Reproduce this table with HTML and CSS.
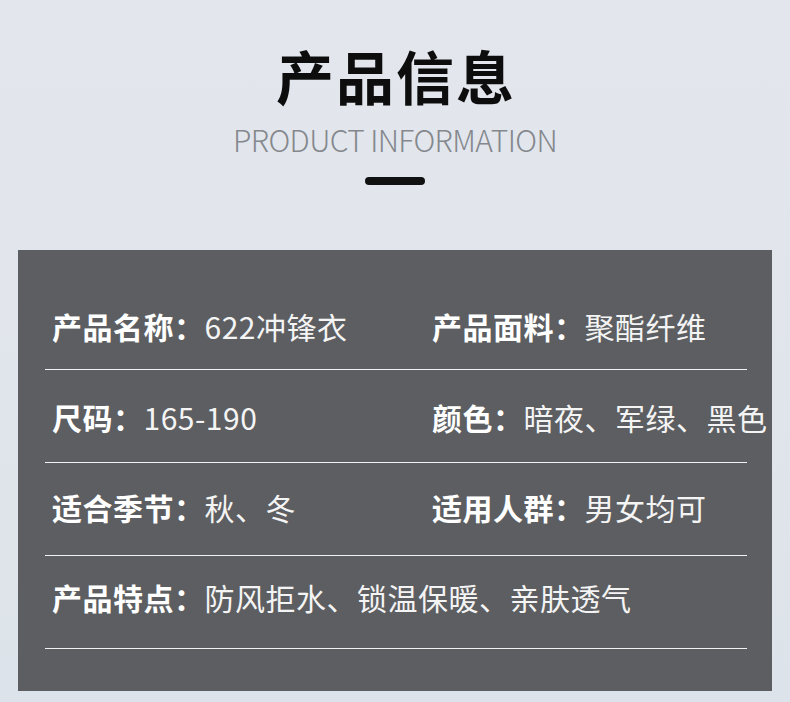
FILE: index.html
```html
<!DOCTYPE html>
<html lang="zh-CN">
<head>
<meta charset="utf-8">
<title>产品信息</title>
<link rel="stylesheet" href="styles.css">
</head>
<body>
<div class="page">
  <header class="head">
    <h1 class="title">产品信息</h1>
    <p class="subtitle">PRODUCT INFORMATION</p>
    <div class="bar"></div>
  </header>
  <section class="panel">
    <div class="row">
      <div class="cell"><span class="label">产品名称：</span><span class="value">622冲锋衣</span></div>
      <div class="cell"><span class="label">产品面料：</span><span class="value">聚酯纤维</span></div>
    </div>
    <div class="row">
      <div class="cell"><span class="label">尺码：</span><span class="value">165-190</span></div>
      <div class="cell"><span class="label">颜色：</span><span class="value">暗夜、军绿、黑色</span></div>
    </div>
    <div class="row">
      <div class="cell"><span class="label">适合季节：</span><span class="value">秋、冬</span></div>
      <div class="cell"><span class="label">适用人群：</span><span class="value">男女均可</span></div>
    </div>
    <div class="row">
      <div class="cell wide"><span class="label">产品特点：</span><span class="value">防风拒水、锁温保暖、亲肤透气</span></div>
    </div>
  </section>
</div>
</body>
</html>
```
FILE: styles.css
```css
html, body {
  margin: 0;
  padding: 0;
}
body {
  width: 790px;
  height: 702px;
  overflow: hidden;
  background: linear-gradient(180deg, #e3e7ed 0%, #e0e5eb 60%, #dde3ea 100%);
  font-family: "Noto Sans CJK SC", "Noto Sans", sans-serif;
}
.page {
  display: flex;
  flex-direction: column;
}
.head {
  display: flex;
  flex-direction: column;
  align-items: center;
  padding-top: 46px;
}
.title {
  margin: 0;
  font-size: 58px;
  line-height: 58px;
  font-weight: 700;
  color: #0d0d0d;
  letter-spacing: 2px;
  padding-left: 2px;
}
.subtitle {
  margin: 20px 0 0;
  font-size: 30px;
  line-height: 31px;
  font-weight: 300;
  color: #85888d;
  letter-spacing: -0.6px;
}
.bar {
  margin-top: 22px;
  width: 60px;
  height: 8px;
  border-radius: 4px;
  background: #111;
}
.panel {
  margin: 65px 18px 0;
  background: #5c5e61;
  padding: 27px 25px 42px 27px;
  display: flex;
  flex-direction: column;
}
.row {
  box-sizing: border-box;
  height: 93px;
  border-bottom: 1px solid #f2f2f2;
  display: grid;
  grid-template-columns: 380px 1fr;
  align-items: center;
  padding-left: 7px;
}
.row:nth-child(1) { padding-top: 5px; }
.row:nth-child(2) { padding-top: 2px; }
.row:nth-child(3) { padding-bottom: 4px; }
.row:nth-child(4) { padding-bottom: 10px; }
.cell {
  font-size: 30px;
  line-height: 40px;
  color: #f4f4f4;
  white-space: nowrap;
  letter-spacing: 0.5px;
}
.wide {
  grid-column: 1 / -1;
}
.label {
  font-weight: 700;
  color: #ffffff;
}
.value {
  font-weight: 400;
}
```
